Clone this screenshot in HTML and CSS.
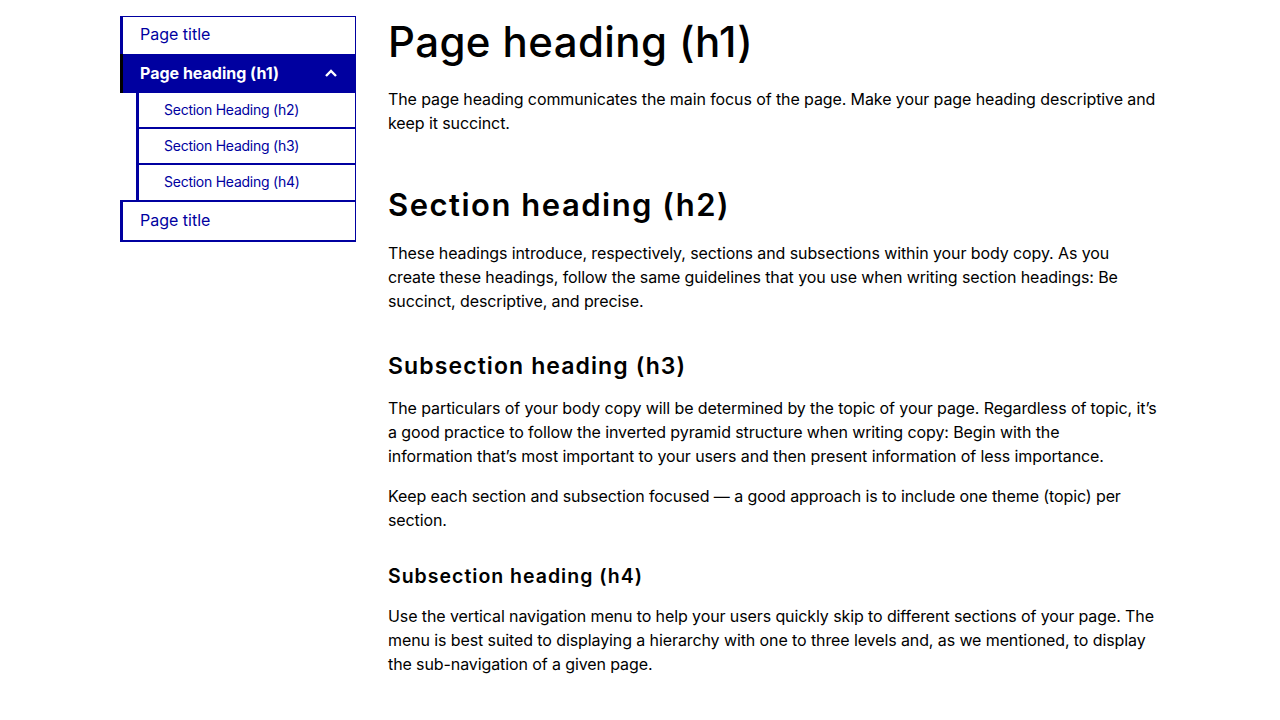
FILE: index.html
```html
<!DOCTYPE html>
<html lang="en">
<head>
<meta charset="utf-8">
<title>Headings</title>
<link rel="stylesheet" href="styles.css">
</head>
<body>
<div class="page">
  <nav class="side-nav">
    <ul class="nav-list">
      <li class="nav-item nav-first"><a class="nav-link" href="#">Page title</a></li>
      <li class="nav-item nav-active">
        <a class="nav-link nav-link-active" href="#">
          <span>Page heading (h1)</span>
          <svg class="chevron" width="14" height="10" viewBox="0 0 14 10" aria-hidden="true"><path d="M2 8 L7 3 L12 8" fill="none" stroke="#fff" stroke-width="2.4"/></svg>
        </a>
        <ul class="sub-list">
          <li class="sub-item"><a class="sub-link" href="#">Section Heading (h2)</a></li>
          <li class="sub-item"><a class="sub-link" href="#">Section Heading (h3)</a></li>
          <li class="sub-item"><a class="sub-link" href="#">Section Heading (h4)</a></li>
        </ul>
      </li>
      <li class="nav-item nav-last"><a class="nav-link" href="#">Page title</a></li>
    </ul>
  </nav>
  <main class="content">
    <h1 class="h1">Page heading (h1)</h1>
    <p class="p p-after-h1">The page heading communicates the main focus of the page. Make your page heading descriptive and keep it succinct.</p>
    <h2 class="h2">Section heading (h2)</h2>
    <p class="p p-after-h2">These headings introduce, respectively, sections and subsections within your body copy. As you create these headings, follow the same guidelines that you use when writing section headings: Be succinct, descriptive, and precise.</p>
    <h3 class="h3">Subsection heading (h3)</h3>
    <p class="p p-after-h3">The particulars of your body copy will be determined by the topic of your page. Regardless of topic, it’s a good practice to follow the inverted pyramid structure when writing copy: Begin with the<br>information that’s most important to your users and then present information of less importance.</p>
    <p class="p p-next">Keep each section and subsection focused — a good approach is to include one theme (topic) per section.</p>
    <h4 class="h4">Subsection heading (h4)</h4>
    <p class="p p-after-h4">Use the vertical navigation menu to help your users quickly skip to different sections of your page. The menu is best suited to displaying a hierarchy with one to three levels and, as we mentioned, to display the sub-navigation of a given page.</p>
  </main>
</div>
</body>
</html>
```
FILE: styles.css
```css
* { box-sizing: border-box; }
html, body { margin: 0; padding: 0; background: #fff; }
body {
  font-family: "Inter", "Roboto", sans-serif;
  color: #000;
}
.page {
  width: 1040px;
  margin: 0 auto;
  padding-top: 16px;
  display: flex;
  gap: 32px;
  align-items: flex-start;
}
.side-nav { width: 236px; flex-shrink: 0; }
.nav-list, .sub-list { list-style: none; margin: 0; padding: 0; }
.nav-item {
  border-left: 3px solid #0000a0;
  border-right: 1px solid #0000a0;
}
.nav-first { border-top: 1px solid #0000a0; }
.nav-last { border-top: 2px solid #0000a0; border-bottom: 2px solid #0000a0; }
.nav-active { border-left: none; border-right: none; }
.nav-link {
  display: flex;
  align-items: center;
  height: 37px;
  padding-left: 17px;
  color: #0000a0;
  text-decoration: none;
  font-size: 16px;
}
.nav-first .nav-link { padding-bottom: 4px; }
.nav-last .nav-link { height: 38px; padding-bottom: 2px; }
.nav-link-active {
  height: 39px;
  background: #0000a0;
  color: #fff;
  font-weight: 700;
  border-left: 3px solid #000;
  padding-left: 17px;
  padding-right: 18px;
  padding-bottom: 1px;
  justify-content: space-between;
}
.chevron { display: block; }
.sub-list {
  margin-left: 16px;
  border-left: 3px solid #0000a0;
  border-right: 1px solid #0000a0;
}
.sub-item { border-bottom: 2px solid #0000a0; }
.sub-item:last-child { border-bottom: none; }
.sub-link {
  display: flex;
  align-items: center;
  height: 34px;
  padding-left: 25px;
  padding-bottom: 2px;
  color: #0000a0;
  text-decoration: none;
  font-size: 14px;
  letter-spacing: -0.25px;
}
.sub-item:last-child .sub-link { height: 35px; }
.content { flex: 1; min-width: 0; }
.h1, .h2, .h3, .h4 {
  margin: 0;
  font-family: "Inter", "Noto Sans", sans-serif;
  color: #000;
}
.h1 { font-size: 42px; line-height: 52px; font-weight: 500; letter-spacing: 0.4px; }
.h2 { font-size: 31px; line-height: 40px; font-weight: 600; margin-top: 50px; letter-spacing: 1.5px; }
.h3 { font-size: 23px; line-height: 30px; font-weight: 600; margin-top: 38px; letter-spacing: 1.1px; }
.h4 { font-size: 19.5px; line-height: 28px; font-weight: 600; margin-top: 30px; letter-spacing: 1px; }
.p { margin: 0; font-size: 16px; line-height: 24px; letter-spacing: -0.1px; }
.p-after-h1 { margin-top: 19px; }
.p-after-h2 { margin-top: 16px; }
.p-after-h3 { margin-top: 15px; }
.p-next { margin-top: 16px; }
.p-after-h4 { margin-top: 14px; }
```
